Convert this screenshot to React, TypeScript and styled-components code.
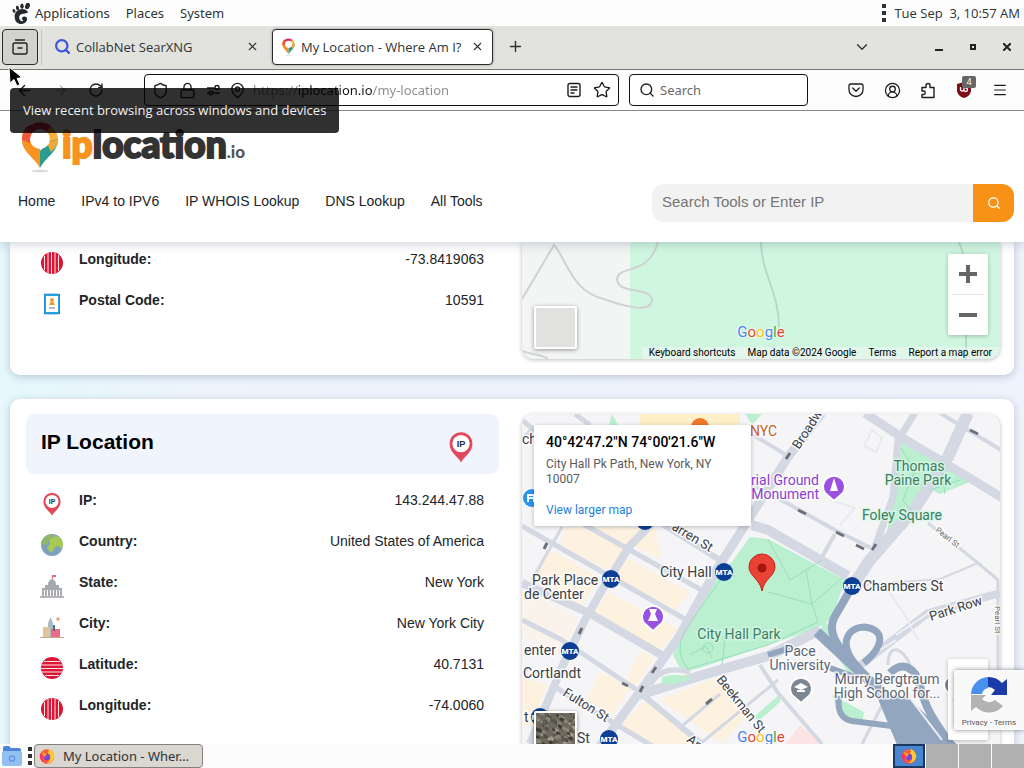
import React from "react";
import styled, { createGlobalStyle, css } from "styled-components";
import { ChevronDown, CircleUserRound, Lock, MapPin, Menu, Plus, RotateCw, Search, Shield, Star, X, ArrowLeft, ArrowRight } from "lucide-react";

const ui = `"Noto Sans", "Open Sans", sans-serif`;
const uiNarrow = `"Open Sans", "Noto Sans", sans-serif`;
const site = `"Liberation Sans", Arial, sans-serif`;
const maps = `Roboto, "Liberation Sans", sans-serif`;

const GlobalStyle = createGlobalStyle`
  *, *::before, *::after { box-sizing: border-box; }
  body { margin: 0; background: #fcfcfc; color: #2e3436; font-family: ${ui}; font-size: 13px; }
  button, input { font: inherit; color: inherit; }
  button { border: 0; padding: 0; background: none; display: inline-flex; align-items: center; justify-content: center; }
  a { color: inherit; text-decoration: none; }
  svg { display: block; flex: none; }
`;

const Desktop = styled.div`
  position: relative;
  display: flex;
  flex-direction: column;
  height: 100vh;
  overflow: hidden;
`;

/* Desktop panel */
const Panel = styled.header`
  display: flex;
  align-items: center;
  flex: none;
  height: 26px;
  padding: 0 4px 0 12px;
  background: #fdfdfd;
`;
const PanelMenu = styled.nav`
  display: flex;
  align-items: center;
  gap: 16px;
  margin-left: 4px;
  flex: 1;
`;
const Clock = styled.time`
  white-space: pre;
  margin-left: 8px;
  font-family: ${uiNarrow};
`;
const DotColumn = styled.span`
  display: grid;
  gap: 3px;
  i { width: 4px; height: 4px; background: #2e3436; }
`;

/* Browser */
const TabBar = styled.div`
  display: flex;
  align-items: center;
  flex: none;
  height: 44px;
  padding: 0 7px 2px 2px;
  background: #e2e2de;
  border-bottom: 1px solid #77777a;
`;
const RecentButton = styled.button`
  width: 36px;
  height: 36px;
  border: 1px solid #2b2b2b;
  border-radius: 4px;
  background: #d2d2cf;
`;
const Divider = styled.span`
  width: 1px;
  height: 36px;
  margin: 0 3px;
  background: #c4c4c0;
`;
const Tab = styled.div<{ $active?: boolean }>`
  display: flex;
  align-items: center;
  gap: 5px;
  width: ${p => (p.$active ? 221 : 227)}px;
  height: 36px;
  padding: 0 8px;
  border: 1px solid transparent;
  border-radius: 4px;
  font-family: ${uiNarrow};
  white-space: nowrap;
  ${p => p.$active ? css`
    border-color: #2b2b2b;
    background: #fff;
    box-shadow: 0 0 3px rgba(0, 0, 0, 0.35);
  ` : css`
    padding-right: 12px;
  `}
  span { flex: 1; }
`;
const BarSpace = styled.span` flex: 1; `;
const NewTab = styled.button` width: 44px; height: 36px; `;
const WindowButtons = styled.div`
  display: flex;
  align-items: center;
  gap: 14px;
  margin-left: 58px;
  button { width: 20px; height: 20px; }
`;
const Toolbar = styled.div`
  display: flex;
  align-items: center;
  flex: none;
  height: 41px;
  padding: 0 14px 0 16px;
  background: #fdfdfd;
  border-bottom: 1px solid #88888a;
`;
const History = styled.div`
  display: flex;
  align-items: center;
  gap: 20px;
  width: 128px;
`;
const Field = styled.label<{ $url?: boolean }>`
  display: flex;
  align-items: center;
  gap: 7px;
  min-width: 0;
  height: 32px;
  padding: 0 7px;
  border: 1px solid #111;
  border-radius: 4px;
  background: #fff;
  ${p => p.$url ? css`flex: 1; margin-right: 10px;` : css`flex: 0 0 179px; padding-left: 9px; gap: 5px;`}
  input { flex: 1; min-width: 0; border: 0; padding: 0; outline: 0; background: transparent; }
  input::placeholder { color: #6a6a6e; opacity: 1; }
`;
const Identity = styled.span`
  display: flex;
  align-items: center;
  gap: 10px;
  margin-right: 1px;
`;
const UrlInput = styled.input`
  && {
    background: linear-gradient(90deg, #8b8b8e 46px, #151515 46px, #151515 120px, #8b8b8e 120px);
    -webkit-background-clip: text;
    background-clip: text;
    -webkit-text-fill-color: transparent;
  }
`;
const Reading = styled.span`
  display: flex;
  align-items: center;
  gap: 12px;
`;
const Actions = styled.div`
  display: flex;
  align-items: center;
  gap: 16px;
  margin-left: 38px;
  button { position: relative; width: 20px; height: 24px; }
`;
const Badge = styled.span`
  position: absolute;
  right: -2px;
  top: -2px;
  width: 14px;
  height: 12px;
  border-radius: 2px;
  background: #666;
  color: #fff;
  font-size: 9px;
  line-height: 12px;
`;
const Tooltip = styled.div`
  position: absolute;
  left: 10px;
  top: 88px;
  z-index: 20;
  padding: 13px;
  border-radius: 4px;
  background: rgba(0, 0, 0, 0.81);
  color: #f2f2f2;
  font-family: ${uiNarrow};
  line-height: 19px;
`;
const Pointer = styled.svg`
  position: absolute;
  left: 8px;
  top: 66px;
  z-index: 21;
`;

/* Web page */
const Page = styled.main`
  position: relative;
  flex: 1;
  min-height: 0;
  overflow: hidden;
  background: linear-gradient(90deg, #e6f8fc, #edf4fc 20%, #eef3fd);
  color: #212529;
  font-family: ${site};
  font-size: 14px;
`;
const SiteHeader = styled.header`
  position: relative;
  z-index: 5;
  height: 131px;
  padding: 9px 10px 0 18px;
  background: #fff;
  box-shadow: 0 2px 10px rgba(60, 70, 90, 0.25);
`;
const Brand = styled.a`
  display: flex;
  align-items: center;
  width: max-content;
  height: 53px;
`;
const BrandName = styled.span`
  padding-top: 3px;
  color: #333;
  font: 900 37px/50px Lato, sans-serif;
  -webkit-text-stroke: 2px currentColor;
  b { color: #f7931e; font-weight: 900; }
  small { font-size: 17px; font-weight: 900; color: #555; -webkit-text-stroke: 0; }
`;
const SiteBar = styled.div`
  display: flex;
  align-items: center;
  justify-content: space-between;
  margin-top: 11px;
`;
const SiteNav = styled.nav` display: flex; gap: 26px; line-height: 20px; padding-bottom: 4px; `;
const SiteSearch = styled.form`
  display: flex;
  flex: 0 1 362px;
  height: 38px;
  input {
    flex: 1;
    min-width: 0;
    border: 0;
    border-radius: 12px 0 0 12px;
    padding: 0 10px 4px;
    background: #f2f2f2;
    font-size: 15px;
  }
  input::placeholder { color: #757575; opacity: 1; }
  button { width: 41px; border-radius: 0 12px 12px 0; background: #f79217; color: #fff; }
`;
const Card = styled.section<{ $first?: boolean }>`
  display: grid;
  grid-template-columns: 473fr 478fr;
  column-gap: 23px;
  margin: 0 10px 24px;
  padding: ${p => (p.$first ? "0" : "15px")} 14px 16px 16px;
  border-radius: ${p => (p.$first ? "0 0 10px 10px" : "10px")};
  background: #fff;
  box-shadow: 0 2px 8px rgba(60, 80, 110, 0.28);
`;
const Heading = styled.div`
  display: flex;
  justify-content: space-between;
  align-items: center;
  height: 60px;
  margin-bottom: 9px;
  padding: 0 24px 0 15px;
  border-radius: 8px;
  background: #f0f5fd;
  h2 { margin: 0; padding-bottom: 4px; font-size: 21px; line-height: 24px; color: #000; }
  svg { margin-top: 6px; }
`;
const Facts = styled.dl` margin: 0; `;
const Fact = styled.div`
  display: flex;
  align-items: flex-start;
  min-height: 41px;
  padding: 7px 15px 0 14px;
  line-height: 20px;
  svg { margin: 2px 15px 0 0; }
  dt { flex: 1; font-weight: 700; }
  dd { margin: 0; }
`;

/* Maps */
const MapFrame = styled.div<{ $tall?: boolean }>`
  position: relative;
  height: ${p => (p.$tall ? 350 : 117)}px;
  overflow: hidden;
  border-radius: ${p => (p.$tall ? "12px" : "0 0 12px 12px")};
  background: ${p => (p.$tall ? "#f5f5f8" : "#cff7e0")};
  box-shadow: 0 1px 4px rgba(0, 0, 0, 0.25);
  font-family: ${maps};
  > svg text { font-family: ${maps}; }
`;
const ZoomControl = styled.div`
  position: absolute;
  right: 12px;
  bottom: 24px;
  display: grid;
  width: 40px;
  height: 81px;
  padding: 0 4px;
  border-radius: 2px;
  background: #fff;
  box-shadow: 0 1px 4px rgba(0, 0, 0, 0.25);
  button + button { border-top: 1px solid #e4e4e4; }
`;
const Thumb = styled.button<{ $tall?: boolean }>`
  position: absolute;
  left: 12px;
  bottom: 10px;
  width: 43px;
  height: 43px;
  border: 2px solid #fff;
  border-radius: 2px;
  background: ${p => (p.$tall ? "#6c685e" : "#e1e1df")};
  box-shadow: 0 1px 4px rgba(0, 0, 0, 0.4);
  overflow: hidden;
`;
const GoogleMark = styled.span`
  position: absolute;
  left: 0;
  right: 0;
  bottom: 17px;
  text-align: center;
  font-size: 15px;
  line-height: 20px;
  color: #4285f4;
  text-shadow: 0 0 1px #fff, 0 0 2px #fff, 0 0 2px #fff;
  .r { color: #ea4335; }
  .y { color: #fbbc05; }
  .g { color: #34a853; }
`;
const Legal = styled.div`
  position: absolute;
  right: 0;
  bottom: 0;
  display: flex;
  gap: 12px;
  padding: 0 8px 0 7px;
  background: rgba(245, 245, 245, 0.5);
  color: #000;
  font-size: 10px;
  line-height: 12px;
  white-space: nowrap;
`;
const PlaceCard = styled.div`
  position: absolute;
  left: 12px;
  top: 11px;
  width: 217px;
  padding: 8px 12px;
  border-radius: 2px;
  background: #fff;
  box-shadow: 0 1px 4px rgba(0, 0, 0, 0.25);
  color: #5b5b5b;
  font-size: 12px;
  line-height: 15px;
  h3 { margin: 0 0 6px; color: #000; font-size: 14px; font-weight: 500; line-height: 18px; }
  p { margin: 0 0 15px; padding-right: 20px; }
  a { display: block; color: #1a7fe0; line-height: 16px; }
`;
const Captcha = styled.aside`
  position: absolute;
  right: 0;
  bottom: 14px;
  display: flex;
  flex-direction: column;
  align-items: center;
  gap: 2px;
  width: 70px;
  height: 60px;
  padding-top: 5px;
  border-radius: 2px 0 0 2px;
  background: #f9f9f9;
  box-shadow: 0 0 5px #888;
  font: 8px/11px Roboto, sans-serif;
  color: #555;
`;

/* Task bar */
const TaskBar = styled.footer`
  display: flex;
  align-items: center;
  flex: none;
  height: 24px;
  padding-left: 2px;
  background: #fcfcfc;
`;
const Launchers = styled.div`
  display: flex;
  align-items: center;
  gap: 6px;
`;
const Task = styled.button`
  && { justify-content: flex-start; }
  gap: 8px;
  width: 169px;
  height: 24px;
  margin-left: 2px;
  padding-left: 4px;
  border: 1px solid #80807c;
  border-radius: 4px;
  background: #dad6d0;
`;
const Workspace = styled.button<{ $current?: boolean }>`
  width: 32px;
  height: 24px;
  margin-right: 1px;
  background: ${p => (p.$current ? "#4a86cf" : "#b0b0b0")};
  border: ${p => (p.$current ? "2px solid #1b3a63" : "0")};
  &:last-child { margin-right: 0; }
`;

const PinLogo = ({ w, h }: { w: number; h: number }) => (
  <svg width={w} height={h} viewBox="0 0 38 52" aria-hidden="true">
    <ellipse cx="19" cy="50" rx="9" ry="1.5" fill="#ddd" />
    <path d="M19 47 C14 37 1 31 1 19 A18 18 0 0 1 6 6 L13 13 L19 26 Z" fill="#f7931e" />
    <path d="M1 19 C1 10 4 7 8 4 L14 13 L9 22 Z" fill="#f05a3c" />
    <path d="M6 7 A18 18 0 0 1 30 5 L25 13 L13 13 Z" fill="#d9304f" />
    <path d="M30 5 A18 18 0 0 1 37 19 L28 22 L24 12 Z" fill="#f6b13c" />
    <path d="M37 18 C37 31 24 37 19 47 L19 30 L27 21 Z" fill="#2a9d8f" />
    <path d="M37 18 L26 22 L30 31 C34 27 37 24 37 18 Z" fill="#f0a83a" />
    <circle cx="19" cy="18" r="10" fill="#fff" />
  </svg>
);

const Foot = () => (
  <svg width="19" height="23" viewBox="0 0 19 23" fill="#26292b" aria-hidden="true">
    <path d="M14 8 C8 5 1 10 3 17 C4 23 13 24 15 18 C16 15 12 13 10 16 C9 18 12 18 11 19 C8 20 6 16 8 13 C10 11 16 12 16 10 Z" />
    <ellipse cx="2" cy="9" rx="1.3" ry="2" transform="rotate(-25 2 9)" />
    <ellipse cx="5.500" cy="6" rx="1.500" ry="2.300" transform="rotate(-15 5.500 6)" />
    <ellipse cx="10" cy="4.200" rx="1.700" ry="2.600" />
    <ellipse cx="15.500" cy="4" rx="2.300" ry="3.200" transform="rotate(20 15.500 4)" />
  </svg>
);

const RecentIcon = () => (
  <svg width="16" height="16" viewBox="0 0 16 16" fill="none" stroke="#222" strokeWidth="1.400" strokeLinecap="round" aria-hidden="true">
    <path d="M3.500 1 H12.500 M1 8 V6 Q1 4 3 4 H13 Q15 4 15 6 V8 M1 7 V13 Q1 15 3 15 H13 Q15 15 15 13 V7 M6 9 H10" />
  </svg>
);

const PuzzleIcon = () => (
  <svg width="16" height="17" viewBox="0 0 16 17" fill="none" stroke="#1d1d1f" strokeWidth="1.400" strokeLinejoin="round" aria-hidden="true">
    <path d="M2 5.500 H6 V3.500 A2 2 0 0 1 10 3.500 V5.500 H14 V15.500 H2 V12.500 H3.500 A1.700 1.700 0 0 0 3.500 9 H2 Z" />
  </svg>
);

const Firefox = () => (
  <svg width="16" height="16" viewBox="0 0 16 16" aria-hidden="true">
    <circle cx="8" cy="8.500" r="7.200" fill="#ff5a36" />
    <path d="M10 1 C14 3 16 7 15 10 C14 13 11 15 8 15 C12 12 12 8 9 6 C10 4 9 2 10 1 Z" fill="#ffcb2e" />
    <path d="M1 5 C0 10 3 15 8 15.500 C4 14 3 11 4 8 Z" fill="#ff2e63" />
    <circle cx="8" cy="9" r="3.200" fill="#7a42d8" />
    <path d="M3 5 C5 4 7 5 8 7 C6 7 6 8 6.500 9.500 C5 9 4 7 3 5 Z" fill="#ff9a2a" />
  </svg>
);

const Folder = () => (
  <svg width="20" height="20" viewBox="0 0 20 20" aria-hidden="true">
    <path d="M1 2 Q1 0 3 0 H7 L9 2 H17 Q19 2 19 4 V8 H1 Z" fill="#4b87d6" />
    <rect x="0" y="5" width="20" height="15" rx="2" fill="#93bff2" />
    <circle cx="10" cy="12.500" r="2.600" fill="none" stroke="#5b95de" strokeWidth="1.300" />
  </svg>
);

const UBlock = () => (
  <svg width="16" height="18" viewBox="0 0 16 18" aria-hidden="true">
    <path d="M8 1 L15 3 V9 C15 13 12 16 8 17 C4 16 1 13 1 9 V3 Z" fill="#7d0d16" />
    <path d="M4.500 6 V8.500 Q4.500 10 6 10 Q8 10 8 8 V6 M8 9 Q8 10.500 9.800 10.500 Q11.500 10.500 11.500 8.800 Q11.500 7 9.500 7" fill="none" stroke="#fff" strokeWidth="1.300" />
  </svg>
);

const Pocket = () => (
  <svg width="16" height="16" viewBox="0 0 16 16" fill="none" stroke="#1d1d1f" strokeWidth="1.300" strokeLinecap="round" strokeLinejoin="round" aria-hidden="true">
    <path d="M2.500 2 H13.500 Q15 2 15 3.500 V8 A7 6.500 0 0 1 1 8 V3.500 Q1 2 2.500 2 Z M4.700 6 L8 9.200 L11.300 6" />
  </svg>
);

const Reader = () => (
  <svg width="14" height="16" viewBox="0 0 14 16" fill="none" stroke="#1d1d1f" strokeWidth="1.400" strokeLinecap="round" aria-hidden="true">
    <rect x="1" y="1.500" width="12" height="13" rx="2" />
    <path d="M4 5 H10 M4 8 H10 M4 11 H7" />
  </svg>
);

const Permissions = () => (
  <svg width="15" height="12" viewBox="0 0 15 12" fill="none" stroke="#1d1d1f" strokeWidth="1.500" aria-hidden="true">
    <path d="M1 4 H8 M7 9 H14 M1 9 H3" />
    <circle cx="11" cy="3.500" r="2" />
    <circle cx="5" cy="9" r="1.700" />
  </svg>
);

const IpPin = ({ size }: { size: number }) => (
  <svg width={size} height={size > 24 ? size + 4 : size} viewBox="0 0 24 28" aria-hidden="true">
    <path d="M12 27.500 C9 22 2 19 2 11 A10 10 0 0 1 22 11 C22 19 15 22 12 27.500 Z" fill="#e2485c" />
    <circle cx="12" cy="11" r="7.600" fill="#fff" />
    <text x="12" y="14" textAnchor="middle" fontFamily="Liberation Sans, sans-serif" fontSize="8" fontWeight="700" fill="#17324d">IP</text>
  </svg>
);

const Stripes = ({ vertical }: { vertical?: boolean }) => (
  <svg width="24" height="24" viewBox="0 0 24 24" aria-hidden="true">
    <g transform={vertical ? "rotate(90 12 12)" : undefined}>
      <circle cx="12" cy="12" r="11" fill="#dc1535" />
      <path d="M4 5.500 H20 M1.500 9 H22.500 M1 12.500 H23 M1.500 16 H22.500 M5 19.500 H19" stroke="#fff" strokeOpacity="0.900" strokeWidth="1" />
    </g>
  </svg>
);

const Stamp = () => (
  <svg width="24" height="24" viewBox="0 0 24 24" aria-hidden="true">
    <rect x="5" y="3" width="14" height="18" fill="#fff" stroke="#2d9fe0" strokeWidth="2" />
    <rect x="4.500" y="2" width="15" height="20" fill="none" stroke="#1c8bd0" strokeWidth="1" strokeDasharray="2 1" />
    <circle cx="12" cy="8" r="2" fill="#f39a2d" />
    <path d="M9 13 H15 L13.500 10 H10.500 Z" fill="#f39a2d" />
    <path d="M9 16 H15" stroke="#777" />
  </svg>
);

const Globe = () => (
  <svg width="24" height="24" viewBox="0 0 24 24" aria-hidden="true">
    <circle cx="12" cy="12" r="11" fill="#7d9fc0" />
    <path d="M3 6 Q8 0 14 1.500 L12 5 L9 7 L7 12 L4 11 L1.500 14 Q0 10 3 6 Z" fill="#8fb866" />
    <path d="M9 7 L15 3 Q22 4 23 11 L22 16 L18 13 L15 14 L13 18 L11 20 L7 15 L10 11 Z" fill="#a7cb52" />
  </svg>
);

const Capitol = () => (
  <svg width="24" height="24" viewBox="0 0 24 24" aria-hidden="true">
    <path d="M12 1 H16 V3 H13 V5 H12 Z" fill="#e76b7c" />
    <path d="M8 11 Q8 6 12 5 Q16 6 16 11 H19 V14 H22 V16 H2 V14 H5 V11 Z" fill="#a5a8ae" />
    <path d="M3 16 V22 M6 16 V22 M9 15 V22 M12 15 V22 M15 15 V22 M18 16 V22 M21 16 V22" stroke="#aaacb2" strokeWidth="2" />
    <path d="M0 23 H24" stroke="#999ca2" strokeWidth="1.500" />
  </svg>
);

const City = () => (
  <svg width="24" height="24" viewBox="0 0 24 24" aria-hidden="true">
    <circle cx="18" cy="4" r="1.800" fill="#f2a178" />
    <path d="M8 22 V8 L10.500 2 L13 8 V22 Z" fill="#a9bac9" />
    <rect x="3" y="12" width="7" height="10" fill="#dcc69a" />
    <rect x="11" y="14" width="9" height="8" fill="#ec6b86" />
    <path d="M14 10 V16" stroke="#526b84" strokeWidth="2" />
    <path d="M0 22.500 H24" stroke="#c5a78f" />
  </svg>
);

const PlusMinus = ({ plus }: { plus?: boolean }) => (
  <svg width="18" height="18" viewBox="0 0 18 18" fill="#666" aria-hidden="true">
    <path d={plus ? "M7 0 H11 V7 H18 V11 H11 V18 H7 V11 H0 V7 H7 Z" : "M0 7 H18 V11 H0 Z"} />
  </svg>
);

const Aerial = () => (
  <svg width="41" height="41" viewBox="0 0 41 41" aria-hidden="true">
    <rect width="41" height="41" fill="#6c685e" />
    {Array.from({ length: 190 }, (_, i) => {
      const x = (i * 17 + (i % 7) * 5) % 41;
      const y = (i * 11 + (i % 5) * 7) % 41;
      return <rect key={i} x={x} y={y} width={2 + (i % 3)} height={1 + (i % 3)} fill={["#3a3932", "#8a8577", "#55534a", "#a09a8b"][i % 4]} transform={`rotate(35 ${x} ${y})`} />;
    })}
  </svg>
);

const Mta = ({ x, y }: { x: number; y: number }) => (
  <g stroke="none">
    <circle cx={x} cy={y} r="9" fill="#0b3f96" />
    <text x={x} y={y + 3} textAnchor="middle" fontSize="8" fontWeight="900" fill="#fff">MTA</text>
  </g>
);

const TrailMap = () => (
  <svg width="100%" height="117" aria-hidden="true">
    <rect width="108" height="117" fill="#f3f4f4" />
    <g fill="none" stroke="#d0d2d3" strokeWidth="2">
      <path d="M0 57 L32 3 C45 18 50 50 82 57 C98 63 128 72 130 59 C131 44 97 53 95 38 C95 22 127 35 136 0" />
      <path d="M0 109 C10 113 20 112 26 117" />
      <path d="M239 0 C240 34 257 50 257 85" stroke="#b9d8c8" />
      <path d="M437 0 L444 20 V117" stroke="#b9d8c8" />
    </g>
  </svg>
);

const CityMap = () => (
  <svg width="100%" height="350" aria-hidden="true">
    <g transform="translate(-522 -414)">
      <g fill="#fdf2df">
        <path d="M565 527 H645 L608 570 L560 545 Z" />
        <path d="M548 548 L600 578 L580 608 L530 580 Z" />
        <path d="M655 527 L662 560 L632 545 Z" />
        <path d="M622 555 L690 592 L676 610 L612 575 Z" />
        <path d="M608 592 L678 628 L661 651 L594 613 Z" />
        <path d="M522 590 L580 618 L560 656 L522 635 Z" opacity="0.500" />
        <path d="M640 650 L655 658 L634 688 L625 682 Z M600 672 L630 688 L612 716 L586 700 Z" />
        <path d="M522 678 L548 684 L532 725 H522 Z" />
        <path d="M618 728 L645 700 L700 744 H650 Z" />
        <path d="M660 700 L720 676 L752 710 L722 744 Z" />
        <path d="M640 414 H740 V425 H640 Z" fill="#fdf0c8" />
      </g>
      <path d="M785 744 L800 725 L822 744 Z" fill="#fde4e4" />
      <g fill="#baf0d0">
        <path d="M750 537 L768 539 L845 580 L832 618 L818 628 L768 645 L700 668 L682 672 L673 655 L682 632 L714 576 L732 562 Z" />
        <path d="M902 438 L940 458 L975 480 L940 494 L928 488 L905 530 L887 531 L896 480 Z" />
        <path d="M824 620 L840 640 L862 674 L848 672 L820 634 Z" />
        <path d="M755 716 L780 694 V702 L758 722 Z M832 695 L864 712 L862 724 L840 715 Z" />
        <path d="M745 414 H762 L752 425 Z M612 414 L618 425 H609 Z" />
      </g>
      <g fill="none" stroke="#d3d8e2" strokeWidth="6" strokeLinejoin="round">
        <path d="M522 526 L690 622" strokeWidth="5" />
        <path d="M560 511 L705 592" strokeWidth="5" />
        <path d="M640 510 L726 564" />
        <path d="M522 583 L589 613 L665 657" strokeWidth="8" />
        <path d="M522 620 L562 640 L637 690" strokeWidth="5" />
        <path d="M645 697 L702 744" />
        <path d="M555 687 L609 720 L652 746" strokeWidth="5" />
        <path d="M822 413 L788 457 L742 530 L715 572 L679 637 L639 693 L600 746" strokeWidth="9" />
        <path d="M655 520 L629 547 L602 590 L585 620 L562 667 L530 744" strokeWidth="8" />
        <path d="M562 527 L532 580" strokeWidth="3" />
        <path d="M639 695 L699 676 L768 656 L820 630" strokeWidth="10" />
        <path d="M650 686 Q660 664 690 672" strokeWidth="5" />
        <path d="M752 525 L768 530 L848 576" strokeWidth="10" />
        <path d="M968 413 L948 457 L915 508 L870 560 L850 590" strokeWidth="12" />
        <path d="M915 413 L898 440 L893 497 L875 547" strokeWidth="7" />
        <path d="M865 413 L901 437 L968 477 L1004 499" strokeWidth="9" />
        <path d="M750 484 L785 502 L835 530 L871 548" strokeWidth="4" />
        <path d="M750 433 L788 456" strokeWidth="4" />
        <path d="M835 534 L818 564" strokeWidth="4" />
        <path d="M940 413 L1001 450" strokeWidth="4" />
        <path d="M928 523 L978 563 L998 580 V670" strokeWidth="3" />
        <path d="M978 563 L940 579 L862 585" strokeWidth="2" />
        <path d="M1000 593 L928 613 L858 667" strokeWidth="8" />
        <path d="M760 665 L778 693 L822 744" strokeWidth="4" />
        <path d="M778 680 L700 744 M720 694 L682 726" strokeWidth="3" />
        <path d="M888 665 C888 640 905 650 910 665 M862 744 L890 690" strokeWidth="3" />
        <path d="M522 420 L534 430 M575 414 L590 425 M522 440 L534 428" strokeWidth="5" />
        <path d="M830 500 L855 508 L840 525 M872 430 L882 438 L876 452 L864 446 Z M888 590 L905 615 L918 640" stroke="#e8eaee" strokeWidth="2" />
      </g>
      <path d="M662 677 Q676 672 692 678 Q678 686 662 684 Z" fill="#baf0d0" />
      <g fill="none" stroke="#98ddba" strokeWidth="1">
        <path d="M730 566 L684 632 Q674 652 688 669 L768 645 L818 622 L812 604 L842 578 M812 604 L768 592 M812 604 L806 570 M725 637 L722 665 M690 655 L706 646 L712 658 M768 539 L790 580 L822 560" />
        <circle cx="708" cy="648" r="5" />
        <path d="M901 448 L915 470 L903 500 L915 515 M930 490 L960 480 M940 460 L945 494" />
      </g>
      <g fill="none" stroke="#92a6bf" strokeWidth="8" strokeLinejoin="round">
        <path d="M849 592 L834 618 Q828 632 840 648 L880 692" />
        <path d="M817 632 L858 670 L901 710 L935 744" strokeWidth="10" />
        <path d="M858 667 C838 645 846 628 864 627 C884 629 886 644 864 663" strokeWidth="7" />
        <path d="M890 673 C903 660 916 668 920 686 C926 710 934 720 950 744" />
        <path d="M839 696 Q836 718 852 721 L892 726" strokeWidth="6" />
        <path d="M768 655 L790 648 M830 668 L858 678" strokeWidth="6" />
        <path d="M876 693 L908 698 L958 746 H898 Z" fill="#92a6bf" strokeWidth="1" />
      </g>
      <path d="M896 635 L930 612 M880 650 L896 640 M900 685 L942 740" fill="none" stroke="#eef1f5" strokeWidth="2" />
      <path d="M544 549 L547 543 M579 634 L582 628 M652 673 L656 667 M640 692 L643 686 M622 683 L628 686 M798 510 L806 514 M836 532 L844 536 M856 545 L864 549 M872 550 L876 544 M786 459 L790 453 M970 430 L978 434 M706 704 L712 699" fill="none" stroke="#6b7078" strokeWidth="3" />
      <circle cx="700" cy="427" r="9" fill="#ee7626" />
      <circle cx="532" cy="498" r="9" fill="#2694ee" />
      <path d="M528 502 V495 H534 V502 M528 498 H536" fill="none" stroke="#fff" strokeWidth="2" />
      <g stroke="#fff" strokeWidth="2">
        <path d="M834 501 L825 493 A11 11 0 1 1 843 493 Z M653 631 L644 623 A11 11 0 1 1 662 623 Z" fill="#9b51e0" />
        <path d="M801 703 L792 695 A11 11 0 1 1 810 695 Z" fill="#7c8792" />
        <circle cx="953" cy="685" r="9" fill="#7c8792" />
      </g>
      <path d="M834 478 L838 491 H830 Z M649 609 H657 L655 614 L658 621 H648 L651 614 Z M794 687 L801 683 L808 687 L801 690 Z M797 690 V692 H805 V690" fill="#fff" />
      <Mta x={645} y={521} />
      <Mta x={611} y={579} />
      <Mta x={724} y={572} />
      <Mta x={852} y={586} />
      <Mta x={570} y={651} />
      <Mta x={540} y={717} />
      <Mta x={609} y={739} />
      <g fontSize="14" fill="#3b4047" stroke="#fff" strokeWidth="3" strokeOpacity="0.800" paintOrder="stroke">
        <text x="522" y="444">ch</text>
        <text x="660" y="577">City Hall</text>
        <text x="532" y="585">Park Place</text>
        <text x="524" y="599">de Center</text>
        <text x="524" y="655">enter</text>
        <text x="523" y="678">Cortlandt</text>
        <text x="524" y="722">t</text>
        <text x="577" y="743">St</text>
        <text x="863" y="591">Chambers St</text>
        <g fontSize="13">
          <text transform="translate(799 450) rotate(-57)">Broadw</text>
          <text transform="translate(671 529) rotate(31)">arren St</text>
          <text transform="translate(562 695) rotate(32)">Fulton St</text>
          <text transform="translate(716 680) rotate(51)">Beekman St</text>
          <text transform="translate(686 741) rotate(38)">Ann</text>
          <text transform="translate(931 621) rotate(-18)">Park Row</text>
        </g>
        <g fontSize="8" fill="#666">
          <text transform="translate(935 531) rotate(38)">Pearl St</text>
          <text transform="translate(995 606) rotate(90)">Pearl St</text>
        </g>
        <text x="750" y="436" fill="#c4621b">NYC</text>
        <g fill="#8a3ed0" textAnchor="end">
          <text x="819" y="485">rial Ground</text>
          <text x="819" y="499">Monument</text>
        </g>
        <g fill="#3b7f63" stroke="#d9f7e6" textAnchor="middle">
          <text x="919" y="471">Thomas</text>
          <text x="918" y="485">Paine Park</text>
          <text x="902" y="520">Foley Square</text>
          <text x="739" y="639">City Hall Park</text>
        </g>
        <g fill="#5a6675" textAnchor="middle">
          <text x="800" y="656">Pace</text>
          <text x="800" y="670">University</text>
          <text x="887" y="684">Murry Bergtraum</text>
          <text x="887" y="698">High School for...</text>
        </g>
      </g>
      <path d="M762 591 C760 579 749 576 749 567 A13 13 0 0 1 775 567 C775 576 764 579 762 591 Z" fill="#ea4335" stroke="#c5221f" />
      <circle cx="762" cy="568" r="4.500" fill="#a3160f" />
    </g>
  </svg>
);

const MapControls = ({ tall }: { tall?: boolean }) => (
  <>
    <ZoomControl>
      <button aria-label="Zoom in"><PlusMinus plus /></button>
      <button aria-label="Zoom out"><PlusMinus /></button>
    </ZoomControl>
    <Thumb $tall={tall} aria-label="Show satellite imagery">{tall && <Aerial />}</Thumb>
    <GoogleMark>G<span className="r">o</span><span className="y">o</span>g<span className="g">l</span><span className="r">e</span></GoogleMark>
    {!tall && (
      <Legal>
        <a href="#shortcuts">Keyboard shortcuts</a>
        <span>Map data ©2024 Google</span>
        <a href="#terms">Terms</a>
        <a href="#report">Report a map error</a>
      </Legal>
    )}
  </>
);

const facts: [string, string, React.ReactNode][] = [
  ["IP:", "143.244.47.88", <IpPin size={24} />],
  ["Country:", "United States of America", <Globe />],
  ["State:", "New York", <Capitol />],
  ["City:", "New York City", <City />],
  ["Latitude:", "40.7131", <Stripes />],
  ["Longitude:", "-74.0060", <Stripes vertical />],
];

const FactRow = ({ name, value, icon }: { name: string; value: string; icon: React.ReactNode }) => (
  <Fact>{icon}<dt>{name}</dt><dd>{value}</dd></Fact>
);

export default function App() {
  return (
    <Desktop>
      <GlobalStyle />
      <Panel>
        <Foot />
        <PanelMenu>
          <a href="#applications">Applications</a>
          <a href="#places">Places</a>
          <a href="#system">System</a>
        </PanelMenu>
        <DotColumn><i /><i /><i /></DotColumn>
        <Clock>Tue Sep  3, 10:57 AM</Clock>
      </Panel>

      <TabBar>
        <RecentButton aria-label="View recent browsing"><RecentIcon /></RecentButton>
        <Divider />
        <Tab>
          <Search size={17} color="#3f55e0" strokeWidth={3.2} />
          <span>CollabNet SearXNG</span>
          <button aria-label="Close tab"><X size={13} strokeWidth={2} /></button>
        </Tab>
        <Tab $active>
          <PinLogo w={15} h={18} />
          <span>My Location - Where Am I?</span>
          <button aria-label="Close tab"><X size={13} strokeWidth={2} /></button>
        </Tab>
        <NewTab aria-label="New tab"><Plus size={17} strokeWidth={2} /></NewTab>
        <BarSpace />
        <button aria-label="List all tabs"><ChevronDown size={18} strokeWidth={1.8} /></button>
        <WindowButtons>
          <button aria-label="Minimize"><svg width="8" height="8"><path d="M0 6 H8 V8 H0 Z" fill="#222" /></svg></button>
          <button aria-label="Maximize"><svg width="6" height="6"><path d="M1 1 H5 V5 H1 Z" fill="none" stroke="#222" strokeWidth="2" /></svg></button>
          <button aria-label="Close"><svg width="8" height="8"><path d="M0 0 L8 8 M8 0 L0 8" stroke="#222" strokeWidth="2" /></svg></button>
        </WindowButtons>
      </TabBar>

      <Toolbar>
        <History>
          <button aria-label="Back"><ArrowLeft size={17} color="#1d1d1f" /></button>
          <button aria-label="Forward"><ArrowRight size={15} color="#aaa" /></button>
          <button aria-label="Reload"><RotateCw size={16} color="#1d1d1f" /></button>
        </History>
        <Field $url>
          <Identity>
            <Shield size={17} strokeWidth={1.9} color="#1d1d1f" />
            <Lock size={17} strokeWidth={1.9} color="#1d1d1f" />
            <Permissions />
          </Identity>
          <MapPin size={17} strokeWidth={1.9} color="#1d1d1f" />
          <UrlInput aria-label="Address" defaultValue="https://iplocation.io/my-location" />
          <Reading>
            <Reader />
            <Star size={18} strokeWidth={1.8} color="#1d1d1f" />
          </Reading>
        </Field>
        <Field>
          <Search size={16} strokeWidth={2} color="#1d1d1f" />
          <input aria-label="Search the web" placeholder="Search" />
        </Field>
        <Actions>
          <button aria-label="Save to Pocket"><Pocket /></button>
          <button aria-label="Account"><CircleUserRound size={17} strokeWidth={1.8} color="#1d1d1f" /></button>
          <button aria-label="Extensions"><PuzzleIcon /></button>
          <button aria-label="uBlock Origin"><UBlock /><Badge>4</Badge></button>
          <button aria-label="Menu"><Menu size={16} strokeWidth={1.8} color="#1d1d1f" /></button>
        </Actions>
      </Toolbar>

      <Page>
        <SiteHeader>
          <Brand href="#home">
            <PinLogo w={44} h={52} />
            <BrandName><b>ip</b>location<small>.io</small></BrandName>
          </Brand>
          <SiteBar>
            <SiteNav>
              <a href="#home">Home</a>
              <a href="#ipv6">IPv4 to IPV6</a>
              <a href="#whois">IP WHOIS Lookup</a>
              <a href="#dns">DNS Lookup</a>
              <a href="#tools">All Tools</a>
            </SiteNav>
            <SiteSearch onSubmit={e => e.preventDefault()}>
              <input aria-label="Search tools" placeholder="Search Tools or Enter IP" />
              <button aria-label="Search"><Search size={14} strokeWidth={2.2} /></button>
            </SiteSearch>
          </SiteBar>
        </SiteHeader>

        <Card $first>
          <Facts>
            <FactRow name="Longitude:" value="-73.8419063" icon={<Stripes vertical />} />
            <FactRow name="Postal Code:" value="10591" icon={<Stamp />} />
          </Facts>
          <MapFrame>
            <TrailMap />
            <MapControls />
          </MapFrame>
        </Card>

        <Card>
          <div>
            <Heading><h2>IP Location</h2><IpPin size={28} /></Heading>
            <Facts>
              {facts.map(([name, value, icon]) => <FactRow key={name} name={name} value={value} icon={icon} />)}
            </Facts>
          </div>
          <MapFrame $tall>
            <CityMap />
            <PlaceCard>
              <h3>40°42'47.2"N 74°00'21.6"W</h3>
              <p>City Hall Pk Path, New York, NY 10007</p>
              <a href="#larger">View larger map</a>
            </PlaceCard>
            <MapControls tall />
          </MapFrame>
        </Card>

        <Captcha>
          <svg width="40" height="40" viewBox="0 0 40 40" aria-hidden="true">
            <path d="M2 19 A18 18 0 0 1 19 2 V13 A8 8 0 0 0 13 19 Z" fill="#4a90f0" />
            <path d="M19 2 A18 18 0 0 1 33 8 L38 4 V20 H22 L26 15 Q23 12 19 12 Z" fill="#1c3aa9" />
            <path d="M2 20 H17 L13 24 Q19 30 26 25 L34 31 A18 18 0 0 1 7 32 L2 36 Z" fill="#b3b3b3" />
          </svg>
          <span><a href="#privacy">Privacy</a> - <a href="#captcha-terms">Terms</a></span>
        </Captcha>
      </Page>

      <TaskBar>
        <Launchers>
          <Folder />
          <DotColumn><i /><i /><i /></DotColumn>
        </Launchers>
        <Task><Firefox /><span>My Location - Wher…</span></Task>
        <BarSpace />
        <Workspace $current aria-label="Workspace 1"><Firefox /></Workspace>
        <Workspace aria-label="Workspace 2" />
        <Workspace aria-label="Workspace 3" />
        <Workspace aria-label="Workspace 4" />
      </TaskBar>

      <Tooltip role="tooltip">View recent browsing across windows and devices</Tooltip>
      <Pointer width="16" height="22" viewBox="0 0 16 22" aria-hidden="true">
        <path d="M1 1 L2 17 L6 13.500 L9 20 L12 18.500 L9 12.500 L14 11.500 Z" fill="#000" stroke="#fff" />
      </Pointer>
    </Desktop>
  );
}
